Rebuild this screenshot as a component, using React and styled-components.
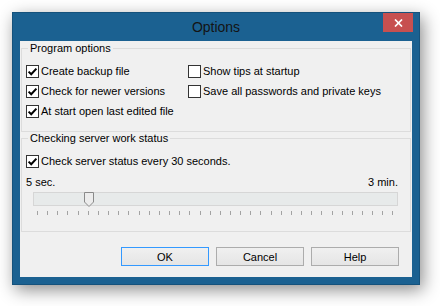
import React from "react";
import styled, { createGlobalStyle } from "styled-components";

const GlobalStyle = createGlobalStyle`
  html, body { margin: 0; padding: 0; background: #ffffff; }
  body { font-family: "Liberation Sans", Arial, sans-serif; font-size: 11px; color: #000; }
  * { box-sizing: border-box; }
`;

const Desktop = styled.div`
  width: 440px;
  height: 306px;
  overflow: hidden;
  background: #ffffff;
  padding: 12px 20px 21px 12px;
`;

const Window = styled.div`
  width: 408px;
  height: 273px;
  display: flex;
  flex-direction: column;
  background: #1b6191;
  border: 1px solid #15527c;
  box-shadow: 3px 5px 16px rgba(0, 0, 0, 0.45);
`;

const TitleBar = styled.div`
  height: 28px;
  display: grid;
  grid-template-columns: 1fr auto 1fr;
  align-items: start;
`;

const Title = styled.div`
  grid-column: 2;
  line-height: 28px;
  font-size: 14px;
  color: #141414;
`;

const CloseButton = styled.div`
  grid-column: 3;
  justify-self: end;
  margin-right: 6px;
  width: 30px;
  height: 19px;
  background: #c75050;
  display: flex;
  align-items: center;
  justify-content: center;
`;

const Client = styled.div`
  flex: 1;
  margin: 0 7px 7px;
  background: #f0f0f0;
  display: flex;
  flex-direction: column;
`;

const Group = styled.fieldset`
  margin: ${(p) => p.$top}px 1px 0;
  padding: ${(p) => p.$pad};
  border: 1px solid #dcdcdc;
  min-width: 0;
`;

const Legend = styled.legend`
  margin-left: 2px;
  padding: 0 2px;
  line-height: 13px;
  font-size: 11px;
`;

const OptionsGrid = styled.div`
  display: grid;
  grid-template-columns: 162px auto;
  grid-template-rows: repeat(3, 20px);
  grid-auto-flow: column;
`;

const CheckRow = styled.label`
  display: flex;
  align-items: center;
  gap: 2px;
  height: 20px;
  white-space: nowrap;
  line-height: 13px;
`;

const Box = styled.span`
  flex: none;
  width: 13px;
  height: 13px;
  border: 1px solid #333333;
  background: #ffffff;
  display: flex;
  align-items: center;
  justify-content: center;
`;

const RangeLabels = styled.div`
  display: flex;
  justify-content: space-between;
  line-height: 13px;
  margin-top: 5px;
`;

const Track = styled.div`
  position: relative;
  margin: 3px 0 0 7px;
  height: 14px;
  border: 1px solid #d6d6d6;
  background: #e7eaea;
`;

const Thumb = styled.svg`
  position: absolute;
  top: -1px;
  width: 10px;
  height: 15px;
`;

const Ticks = styled.div`
  display: flex;
  justify-content: space-between;
  width: 357px;
  margin: 5px 0 0 11px;
  height: 4px;
`;

const Tick = styled.span`
  width: 1px;
  height: 4px;
  background: #a3a3a3;
`;

const ButtonRow = styled.div`
  display: flex;
  justify-content: flex-end;
  gap: 7px;
  margin-top: 15px;
  padding-right: 13px;
`;

const Button = styled.button`
  width: 88px;
  height: 19px;
  padding: 0;
  font: 11px "Liberation Sans", Arial, sans-serif;
  color: #000;
  background: linear-gradient(#f0f0f0, #e5e5e5);
  border: 1px solid ${(p) => (p.$primary ? "#3399ff" : "#acacac")};
`;

function CheckMark() {
  return (
    <svg width="11" height="11" viewBox="0 0 11 11">
      <path d="M1.6 5.6 L4.2 8.2 L9.4 2.6" fill="none" stroke="#000" strokeWidth="2" />
    </svg>
  );
}

function Check({ checked, children }) {
  return (
    <CheckRow>
      <Box>{checked && <CheckMark />}</Box>
      <span>{children}</span>
    </CheckRow>
  );
}

const TICKS = 36;
const VALUE_INDEX = 5;
const SPACING = 356 / (TICKS - 1);

export default function App() {
  return (
    <>
      <GlobalStyle />
      <Desktop>
        <Window>
          <TitleBar>
            <Title>Options</Title>
            <CloseButton>
              <svg width="9" height="8" viewBox="0 0 9 8">
                <path d="M1 0.5 L8 7.5 M8 0.5 L1 7.5" stroke="#fff" strokeWidth="1.7" />
              </svg>
            </CloseButton>
          </TitleBar>
          <Client>
            <Group $top={1} $pad="6px 4px 10px 4px">
              <Legend>Program options</Legend>
              <OptionsGrid>
                <Check checked>Create backup file</Check>
                <Check checked>Check for newer versions</Check>
                <Check checked>At start open last edited file</Check>
                <Check>Show tips at startup</Check>
                <Check>Save all passwords and private keys</Check>
              </OptionsGrid>
            </Group>
            <Group $top={0} $pad="6px 12px 16px 4px">
              <Legend>Checking server work status</Legend>
              <Check checked>Check server status every 30 seconds.</Check>
              <RangeLabels>
                <span>5 sec.</span>
                <span>3 min.</span>
              </RangeLabels>
              <Track>
                <Thumb
                  viewBox="0 0 10 15"
                  style={{ left: 4 + VALUE_INDEX * SPACING - 5 }}
                >
                  <path
                    d="M0.5 0.5 H9.5 V10 L5 14.5 L0.5 10 Z"
                    fill="#ececec"
                    stroke="#8a8a8a"
                  />
                </Thumb>
              </Track>
              <Ticks>
                {Array.from({ length: TICKS }, (_, i) => (
                  <Tick key={i} />
                ))}
              </Ticks>
            </Group>
            <ButtonRow>
              <Button $primary>OK</Button>
              <Button>Cancel</Button>
              <Button>Help</Button>
            </ButtonRow>
          </Client>
        </Window>
      </Desktop>
    </>
  );
}
